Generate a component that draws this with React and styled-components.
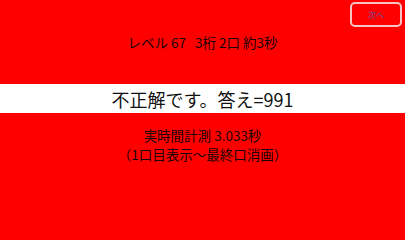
import React from "react";
import styled, { createGlobalStyle } from "styled-components";

const Global = createGlobalStyle`
  html, body { margin: 0; padding: 0; background: #ff0000; }
  body { font-family: "Noto Sans CJK JP", "Noto Sans", sans-serif; }
`;

const Page = styled.div`
  width: 405px;
  height: 228px;
  background: #ff0000;
  display: flex;
  flex-direction: column;
  padding-top: 2px;
  box-sizing: border-box;
  overflow: hidden;
`;

const TopBar = styled.div`
  display: flex;
  justify-content: flex-end;
  padding-right: 3px;
`;

const NextButton = styled.button`
  width: 52px;
  height: 25px;
  box-sizing: border-box;
  border: 2px solid #f6c2c4;
  border-radius: 5px;
  background: #ff0000;
  color: #5c52a8;
  font-family: "Noto Sans CJK JP", sans-serif;
  font-size: 8px;
  padding: 0;
  display: flex;
  align-items: center;
  justify-content: center;
`;

const Line = styled.div`
  text-align: center;
  font-size: 13.5px;
  line-height: 19px;
  color: #1a0505;
  margin-top: ${(p) => p.$mt || 0}px;
  white-space: pre;
`;

const Band = styled.div`
  margin-top: 32px;
  height: 29px;
  background: #ffffff;
  display: flex;
  align-items: center;
  justify-content: center;
  font-size: 18px;
  color: #111;
`;

export default function App() {
  return (
    <>
      <Global />
      <Page>
        <TopBar>
          <NextButton>次へ</NextButton>
        </TopBar>
        <Line $mt={6}>{"レベル 67   3桁 2口 約3秒"}</Line>
        <Band>不正解です。答え=991</Band>
        <Line $mt={13}>実時間計測 3.033秒</Line>
        <Line>（1口目表示～最終口消画）</Line>
      </Page>
    </>
  );
}
